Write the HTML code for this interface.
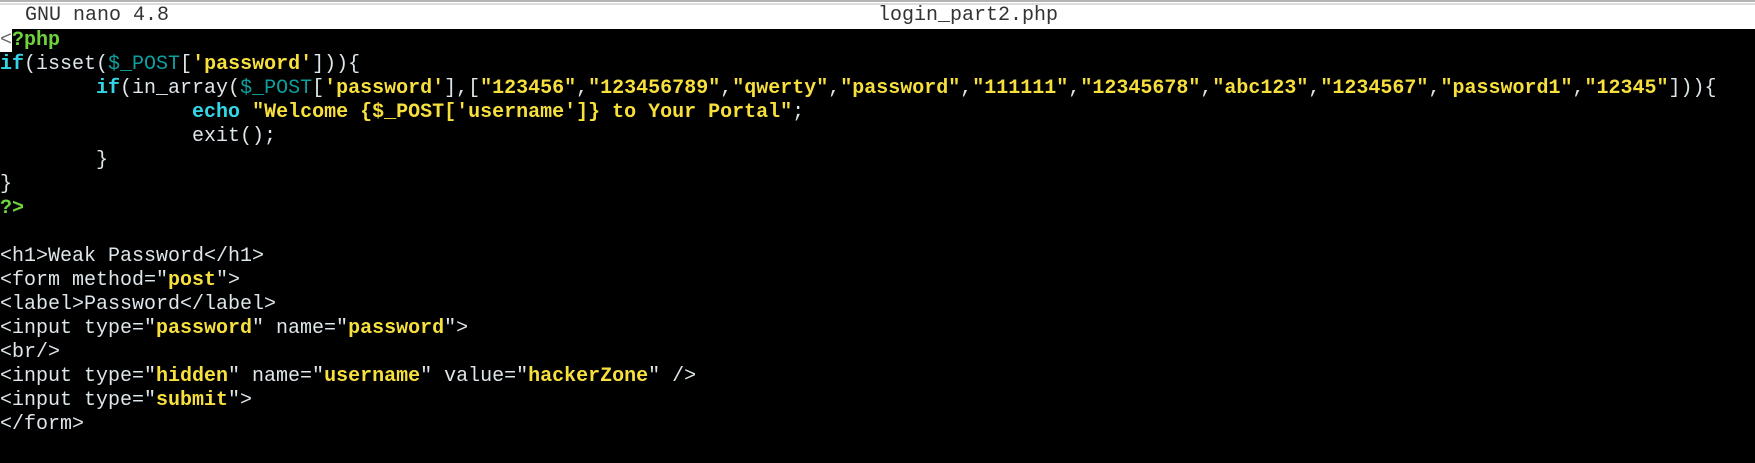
<!DOCTYPE html>
<html><head><meta charset="utf-8"><style>
html,body{margin:0;padding:0;width:1755px;height:463px;overflow:hidden;background:#000;}
#hdr{position:absolute;left:0;top:0;width:1755px;height:29px;background:#fff;}
#hdr .l1{position:absolute;left:0;top:0;width:1755px;height:2px;background:#b4b4b4;}
#hdr .l2{position:absolute;left:0;top:3px;width:1755px;height:2px;background:#dcdcdc;}
.ht{position:absolute;top:4px;font:20px/24px "Liberation Mono",monospace;color:#333;white-space:pre;}
pre{position:absolute;left:0;top:29px;margin:0;font:20px/24px "Liberation Mono",monospace;color:#dde6ea;white-space:pre;}
.k{color:#33d6e6;font-weight:bold}
.v{color:#0f9e9e}
.s{color:#f7df3c;font-weight:bold}
.g{color:#6fd43c;font-weight:bold}
.c{background:#fff;color:#666}
</style></head><body>
<div id="hdr"><div class="l1"></div><div class="l2"></div>
<div class="ht" style="left:25px">GNU nano 4.8</div>
<div class="ht" style="left:878px">login_part2.php</div></div>
<pre><span class="c">&lt;</span><span class="g">?php</span>
<span class="k">if</span>(isset(<span class="v">$_POST</span>[<span class="s">'password'</span>])){
        <span class="k">if</span>(in_array(<span class="v">$_POST</span>[<span class="s">'password'</span>],[<span class="s">"123456"</span>,<span class="s">"123456789"</span>,<span class="s">"qwerty"</span>,<span class="s">"password"</span>,<span class="s">"111111"</span>,<span class="s">"12345678"</span>,<span class="s">"abc123"</span>,<span class="s">"1234567"</span>,<span class="s">"password1"</span>,<span class="s">"12345"</span>])){
                <span class="k">echo</span> <span class="s">"Welcome {$_POST['username']} to Your Portal"</span>;
                exit();
        }
}
<span class="g">?&gt;</span>

&lt;h1&gt;Weak Password&lt;/h1&gt;
&lt;form method="<span class="s">post</span>"&gt;
&lt;label&gt;Password&lt;/label&gt;
&lt;input type="<span class="s">password</span>" name="<span class="s">password</span>"&gt;
&lt;br/&gt;
&lt;input type="<span class="s">hidden</span>" name="<span class="s">username</span>" value="<span class="s">hackerZone</span>" /&gt;
&lt;input type="<span class="s">submit</span>"&gt;
&lt;/form&gt;</pre>
</body></html>
